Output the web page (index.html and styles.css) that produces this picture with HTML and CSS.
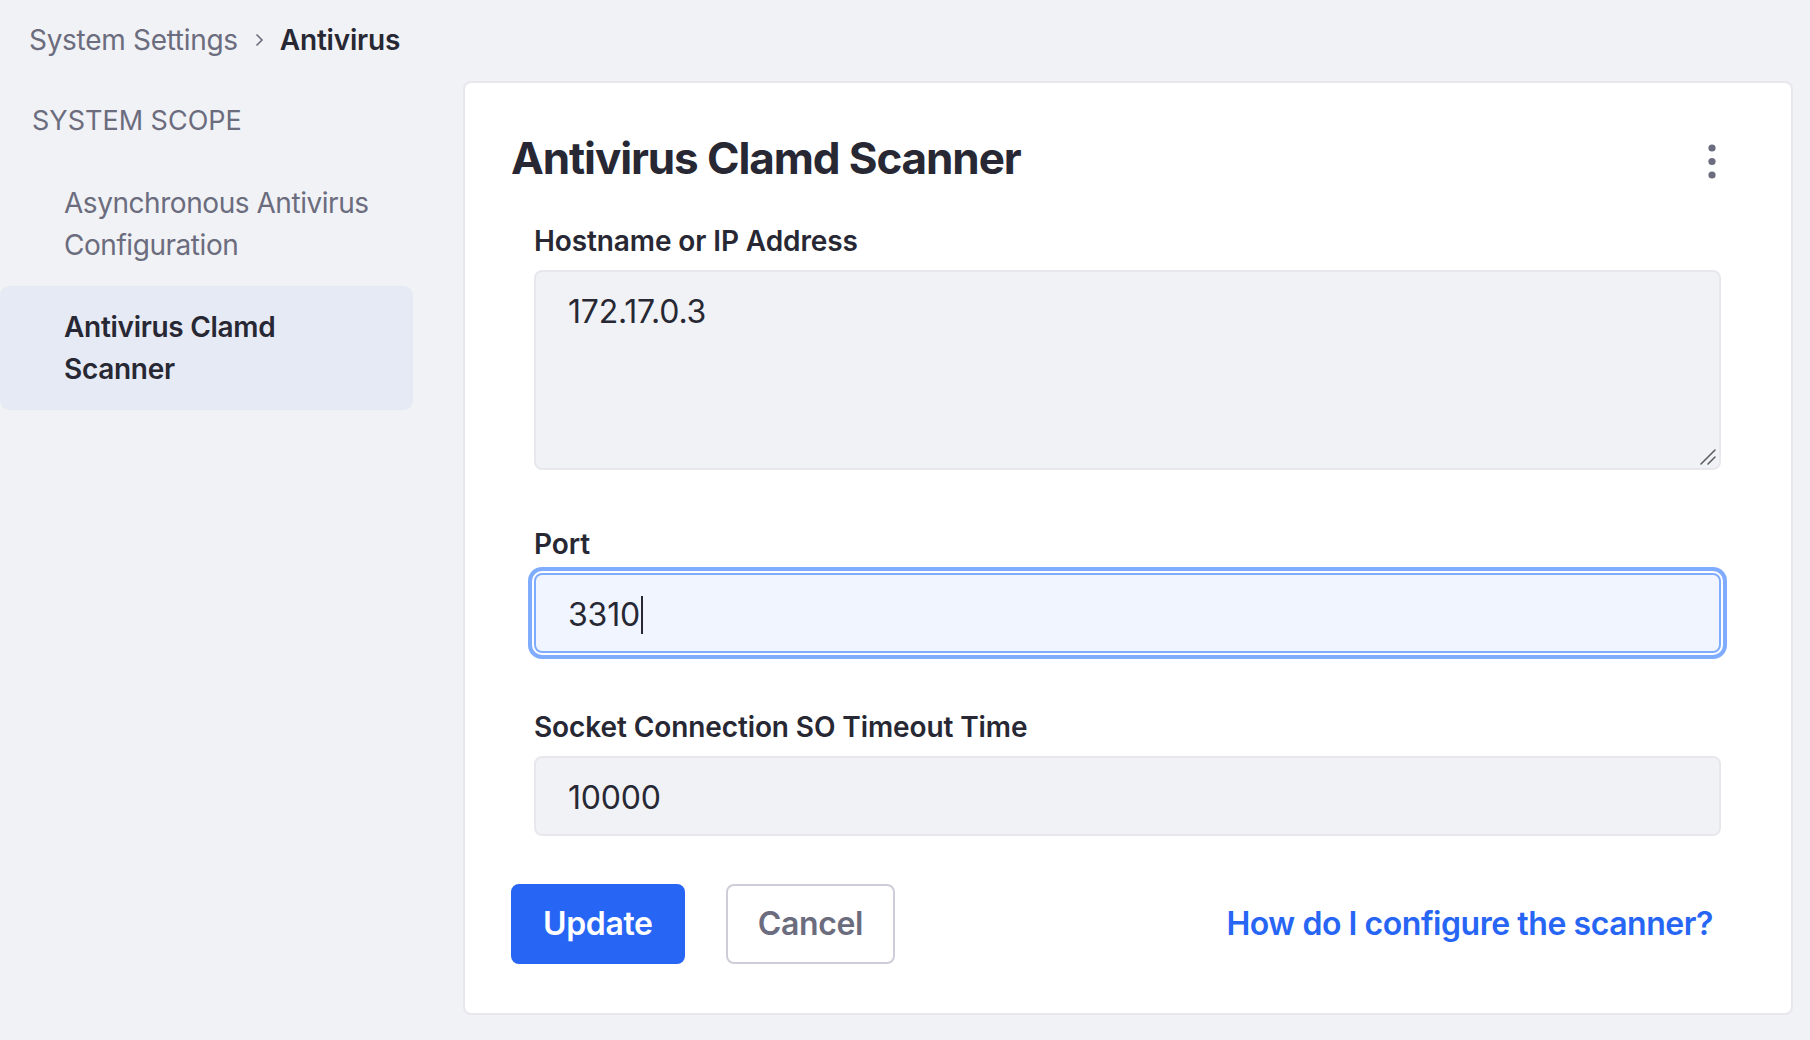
FILE: index.html
```html
<!DOCTYPE html>
<html lang="en">
<head>
<meta charset="utf-8">
<title>Antivirus - System Settings</title>
<link rel="stylesheet" href="styles.css">
</head>
<body>
<div class="page">
  <nav class="breadcrumb">
    <span class="crumb">System Settings</span>
    <svg class="crumb-sep" viewBox="0 0 10 16" aria-hidden="true"><path d="M2.5 2.5l5.5 5.5-5.5 5.5"/></svg>
    <span class="crumb current">Antivirus</span>
  </nav>
  <div class="layout">
    <aside class="sidebar">
      <div class="side-heading">SYSTEM SCOPE</div>
      <ul class="side-nav">
        <li class="side-item">Asynchronous Antivirus Configuration</li>
        <li class="side-item active">Antivirus Clamd Scanner</li>
      </ul>
    </aside>
    <main class="sheet">
      <div class="sheet-header">
        <h1 class="sheet-title">Antivirus Clamd Scanner</h1>
        <button class="kebab" type="button" aria-label="Options">
          <svg viewBox="0 0 8 36" aria-hidden="true"><circle cx="4" cy="4" r="3.6"/><circle cx="4" cy="17.5" r="3.6"/><circle cx="4" cy="31" r="3.6"/></svg>
        </button>
      </div>
      <div class="fields">
        <div class="form-group">
          <label class="label">Hostname or IP Address</label>
          <div class="textarea-wrap">
            <textarea class="control textarea">172.17.0.3</textarea>
            <svg class="resizer" viewBox="0 0 20 20" aria-hidden="true"><path d="M2 16L16 2M9 16l7-7"/></svg>
          </div>
        </div>
        <div class="form-group">
          <label class="label">Port</label>
          <div class="control focused">3310<span class="caret"></span></div>
        </div>
        <div class="form-group">
          <label class="label">Socket Connection SO Timeout Time</label>
          <div class="control">10000</div>
        </div>
      </div>
      <div class="actions">
        <button class="btn btn-primary" type="button">Update</button>
        <button class="btn btn-secondary" type="button">Cancel</button>
        <a class="btn btn-link" href="#">How do I configure the scanner?</a>
      </div>
    </main>
  </div>
</div>
</body>
</html>
```
FILE: styles.css
```css
* { box-sizing: border-box; }
html, body { margin: 0; padding: 0; }
body {
  background: #f1f2f5;
  font-family: Inter, "Noto Sans", "Liberation Sans", sans-serif;
  color: #272833;
  width: 1810px;
  height: 1040px;
  overflow: hidden;
}
.page { padding-top: 19px; }

.breadcrumb {
  display: flex;
  align-items: center;
  padding-left: 29px;
  height: 42px;
  font-size: 28px;
  line-height: 42px;
}
.crumb { color: #6b6c7e; letter-spacing: -0.3px; }
.crumb.current { color: #272833; font-weight: 600; letter-spacing: -0.2px; }
.crumb-sep {
  width: 10px;
  height: 16px;
  margin: 0 16px 0 16px;
  fill: none;
  stroke: #6b6c7e;
  stroke-width: 1.6;
}

.layout {
  display: grid;
  grid-template-columns: 413px 1330px;
  column-gap: 50px;
  margin-top: 20px;
}

.side-heading {
  margin-top: 22px;
  padding-left: 32px;
  font-size: 27px;
  line-height: 36px;
  color: #6b6c7e;
}
.side-nav {
  list-style: none;
  margin: 23px 0 0;
  padding: 0;
}
.side-item {
  padding: 20px 32px 20px 64px;
  font-size: 28px;
  line-height: 42px;
  color: #6b6c7e;
  border-radius: 9px;
  letter-spacing: -0.45px;
}
.side-item.active {
  background: #e6eaf5;
  color: #272833;
  font-weight: 600;
  letter-spacing: -0.3px;
}

.sheet {
  background: #fff;
  border: 2px solid #e7e7ed;
  border-radius: 8px;
  padding: 46px 46px 49px;
  height: 934px;
}
.sheet-header {
  display: flex;
  align-items: center;
  justify-content: space-between;
  height: 58px;
}
.sheet-title {
  margin: 0;
  font-size: 44px;
  line-height: 58px;
  font-weight: 700;
  color: #272833;
  letter-spacing: -1.1px;
}
.kebab {
  width: 62px;
  height: 62px;
  margin-top: 8px;
  margin-right: 2px;
  border: 0;
  background: transparent;
  padding: 0;
  display: flex;
  align-items: center;
  justify-content: center;
}
.kebab svg { width: 8px; height: 36px; fill: #6b6c7e; }

.fields {
  margin-top: 33px;
  padding: 0 24px 0 23px;
}
.form-group { margin-bottom: 53px; }
.form-group:last-child { margin-bottom: 0; }
.label {
  display: block;
  font-size: 28px;
  line-height: 42px;
  font-weight: 600;
  color: #272833;
  margin-bottom: 8px;
  letter-spacing: -0.1px;
}
.control {
  display: block;
  width: 100%;
  height: 80px;
  padding: 16px 32px 12px;
  background: #f1f2f5;
  border: 2px solid #e7e7ed;
  border-radius: 8px;
  font-family: inherit;
  font-size: 32px;
  line-height: 48px;
  color: #272833;
  letter-spacing: -0.2px;
}
.textarea-wrap { position: relative; }
.textarea {
  height: 200px;
  resize: none;
  outline: none;
}
.resizer {
  position: absolute;
  right: 2px;
  bottom: 2px;
  width: 20px;
  height: 20px;
  fill: none;
  stroke: #5f5f66;
  stroke-width: 1.6;
  stroke-linecap: round;
}
.control.focused {
  background: #f0f5ff;
  border-color: #80acff;
  box-shadow: 0 0 0 2px #fff, 0 0 0 6px #80acff;
}
.caret {
  display: inline-block;
  width: 2px;
  height: 38px;
  background: #272833;
  vertical-align: -8px;
  margin-left: 1px;
}

.actions {
  display: flex;
  align-items: center;
  gap: 41px;
  margin-top: 48px;
}
.btn {
  height: 80px;
  padding: 14px 30px;
  border-radius: 8px;
  border: 2px solid transparent;
  font-family: inherit;
  font-size: 32px;
  line-height: 48px;
  font-weight: 600;
  text-decoration: none;
  display: inline-flex;
  align-items: center;
  letter-spacing: -0.35px;
}
.btn-primary { background: #2765f5; border-color: #2765f5; color: #fff; }
.btn-secondary { background: #fff; border-color: #cdced9; color: #6b6c7e; }
.btn-link { margin-left: auto; color: #2765f5; background: transparent; letter-spacing: -0.45px; }
```
